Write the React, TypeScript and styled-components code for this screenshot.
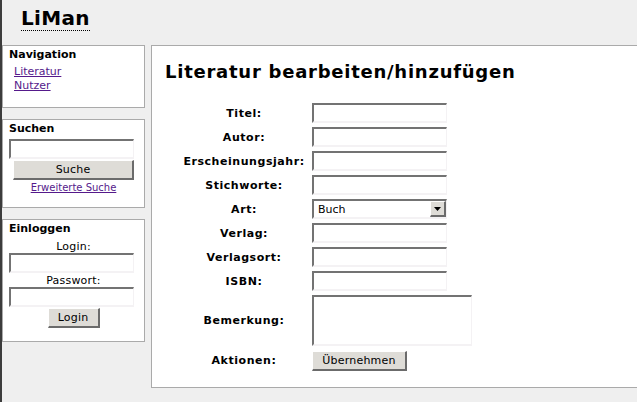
import React from 'react'
import styled, { createGlobalStyle } from 'styled-components'

const GlobalStyle = createGlobalStyle`
  html, body {
    margin: 0;
    padding: 0;
    overflow: hidden;
    background: #efefef;
  }

  body {
    font-family: 'DejaVu Sans', sans-serif;
    font-size: 11px;
    color: #000;
  }

  * {
    box-sizing: border-box;
  }
`

export default function App() {
  return (
    <>
      <GlobalStyle />
      <Page>
        <Header>
          <Logo>LiMan</Logo>
        </Header>
        <Columns>
          <Sidebar>
            <Box>
              <BoxTitle>Navigation</BoxTitle>
              <NavList>
                <NavLink href='#literatur'>Literatur</NavLink>
                <NavLink href='#nutzer'>Nutzer</NavLink>
              </NavList>
            </Box>

            <Box>
              <BoxTitle>Suchen</BoxTitle>
              <SideInput type='text' $top={4} />
              <SideButton $width={121}>Suche</SideButton>
              <SmallLink href='#suche'>Erweiterte Suche</SmallLink>
            </Box>

            <Box>
              <BoxTitle>Einloggen</BoxTitle>
              <FieldLabel $top={5}>Login:</FieldLabel>
              <SideInput type='text' $top={0} />
              <FieldLabel $top={1}>Passwort:</FieldLabel>
              <SideInput type='password' $top={0} />
              <SideButton $width={52}>Login</SideButton>
            </Box>
          </Sidebar>

          <Main>
            <Title>Literatur bearbeiten/hinzufügen</Title>
            <Form>
              <Label>Titel:</Label>
              <TextInput type='text' />

              <Label>Autor:</Label>
              <TextInput type='text' />

              <Label>Erscheinungsjahr:</Label>
              <TextInput type='text' />

              <Label>Stichworte:</Label>
              <TextInput type='text' />

              <Label>Art:</Label>
              <SelectWrap>
                <Select defaultValue='buch'>
                  <option value='buch'>Buch</option>
                  <option value='artikel'>Artikel</option>
                </Select>
                <SelectArrow>
                  <svg width='7' height='4' viewBox='0 0 7 4'>
                    <path d='M0 0h7L3.5 4z' fill='#000' />
                  </svg>
                </SelectArrow>
              </SelectWrap>

              <Label>Verlag:</Label>
              <TextInput type='text' />

              <Label>Verlagsort:</Label>
              <TextInput type='text' />

              <Label>ISBN:</Label>
              <TextInput type='text' />

              <Label>Bemerkung:</Label>
              <TextArea />

              <Label>Aktionen:</Label>
              <SubmitButton>Übernehmen</SubmitButton>
            </Form>
          </Main>
        </Columns>
      </Page>
    </>
  )
}

const Page = styled.div`
  min-height: 100vh;
  border-left: 2px solid #3c3c3c;
  background: #efefef;
`

const Header = styled.div`
  height: 45px;
  padding: 7px 0 0 19px;
`

const Logo = styled.span`
  display: inline-block;
  font-size: 20px;
  line-height: 23px;
  font-weight: bold;
  letter-spacing: 0.3px;
  border-bottom: 1px dotted #000;
`

const Columns = styled.div`
  display: flex;
  align-items: flex-start;
  gap: 6px;
`

const Sidebar = styled.div`
  width: 143px;
  flex-shrink: 0;
  display: flex;
  flex-direction: column;
  gap: 11px;
`

const Box = styled.div`
  display: flex;
  flex-direction: column;
  align-items: flex-start;
  background: #fff;
  border: 1px solid #aaa;
  padding: 2px 6px 13px;
`

const BoxTitle = styled.div`
  font-size: 11px;
  line-height: 13px;
  font-weight: bold;
`

const NavList = styled.div`
  display: flex;
  flex-direction: column;
  margin: 4px 0 1px 5px;
`

const NavLink = styled.a`
  font-size: 11px;
  line-height: 14px;
  color: #551a8b;
  text-decoration: underline;
`

const SmallLink = styled.a`
  align-self: center;
  margin-top: 2px;
  font-size: 10px;
  line-height: 12px;
  color: #551a8b;
  text-decoration: underline;
`

const FieldLabel = styled.div<{ $top: number }>`
  align-self: center;
  margin-top: ${p => p.$top}px;
  font-size: 11px;
  line-height: 13px;
  letter-spacing: 0.2px;
`

const insetField = `
  background: #fff;
  border-style: solid;
  border-width: 2px 1px 2px 2px;
  border-color: #737373 #f4f2f4 #f4f2f4 #737373;
  font-family: 'DejaVu Sans', sans-serif;
  font-size: 11px;
  padding: 0 4px;
  outline: none;
`

const SideInput = styled.input<{ $top: number }>`
  ${insetField}
  width: 125px;
  height: 20px;
  margin-top: ${p => p.$top}px;
`

const buttonLook = `
  background: #dedcd7;
  border-style: solid;
  border-width: 1px 2px 2px 1px;
  border-color: #fff #6b6b6b #6b6b6b #fff;
  font-family: 'DejaVu Sans', sans-serif;
  font-size: 11px;
  letter-spacing: 0.2px;
  color: #000;
  padding: 0;
`

const SideButton = styled.button<{ $width: number }>`
  ${buttonLook}
  align-self: center;
  width: ${p => p.$width}px;
  height: 20px;
  margin-top: 1px;
`

const Main = styled.div`
  width: 520px;
  flex-shrink: 0;
  background: #fff;
  border: 1px solid #aaa;
  padding: 15px 0 16px 13px;
`

const Title = styled.h2`
  margin: 0 0 21px;
  font-size: 18px;
  line-height: 21px;
  font-weight: bold;
  letter-spacing: 0.75px;
`

const Form = styled.div`
  display: grid;
  grid-template-columns: 130px auto;
  justify-content: start;
  align-items: center;
  column-gap: 3px;
  row-gap: 4px;
  margin-left: 14px;
`

const Label = styled.div`
  font-size: 11px;
  font-weight: bold;
  letter-spacing: 0.55px;
  text-align: center;
`

const TextInput = styled.input`
  ${insetField}
  width: 135px;
  height: 20px;
`

const TextArea = styled.textarea`
  ${insetField}
  width: 160px;
  height: 51px;
  resize: none;
`

const SelectWrap = styled.div`
  position: relative;
  width: 135px;
  height: 20px;
`

const Select = styled.select`
  ${insetField}
  appearance: none;
  width: 100%;
  height: 100%;
  color: #000;
`

const SelectArrow = styled.span`
  position: absolute;
  top: 2px;
  right: 1px;
  width: 16px;
  height: 16px;
  display: flex;
  align-items: center;
  justify-content: center;
  background: #dedcd7;
  border-style: solid;
  border-width: 1px 2px 2px 1px;
  border-color: #fff #6b6b6b #6b6b6b #fff;
  pointer-events: none;
`

const SubmitButton = styled.button`
  ${buttonLook}
  width: 95px;
  height: 20px;
  margin-top: 1px;
  justify-self: start;
`
